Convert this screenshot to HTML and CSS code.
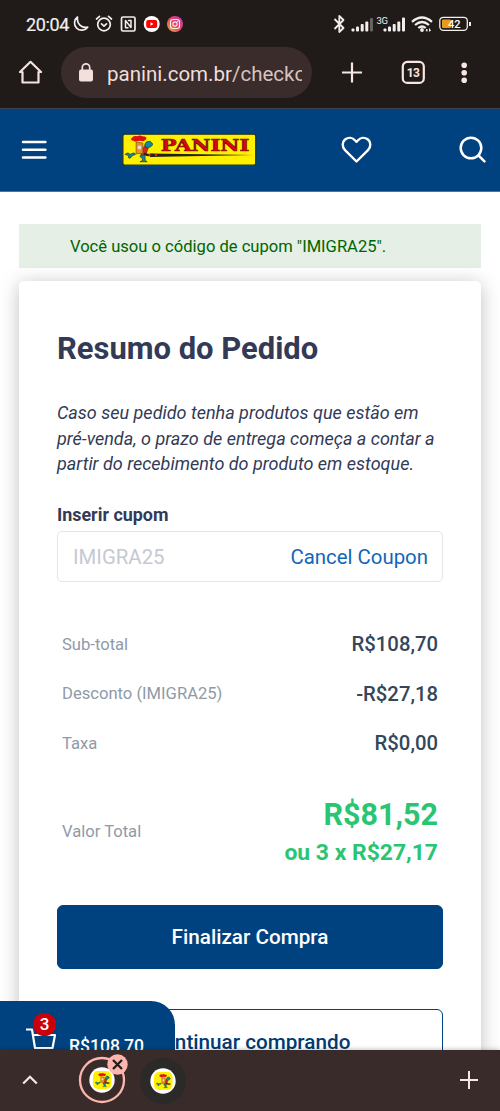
FILE: index.html
```html
<!DOCTYPE html>
<html lang="pt-BR">
<head>
<meta charset="utf-8">
<title>Panini - Checkout</title>
<link rel="stylesheet" href="styles.css">
</head>
<body>
<svg class="defs" width="0" height="0" aria-hidden="true">
  <symbol id="mascot" viewBox="0 0 30 30">
    <path d="M1 20.500l3-1.500 2.500 1.500 4-1.500 1.500 1.500-3.500 1.500-2 2.500-2-.5.500-2z" fill="#138a9c" stroke="#17352e" stroke-width=".7"/>
    <path d="M17 17l5-6 3 3-2 6-5 1.500z" fill="#d9251c" stroke="#222" stroke-width=".6"/>
    <path d="M17.500 21l4 .5.500 5.500 2 1.200h-7.500l3-1.500-1-2.700-2-1zM21.500 10l2-2.500 3.500-.5 3 3-2 2.500-3.500 1.500-2.500-1z" fill="#138a9c" stroke="#17352e" stroke-width=".7"/>
    <path d="M21 18.500q4 2 9 1.500v2q-5 1-9-.5z" fill="#222"/>
    <path d="M25.500 19.800h2v2.400h-2z" fill="#e2231a"/>
    <path d="M9.500 6.500q-4-1.500-1-3.500 2-2 5-1.200 3-1.300 5.500 0 5 .2 4 3.200l-3 2-4-.5-4 1z" fill="#e2100c"/>
    <path d="M12.500 8l7 .8v11h-7z" fill="#e9902a" stroke="#713b15" stroke-width=".6"/>
    <circle cx="16" cy="13.500" r="2" fill="#e8dcc5"/>
  </symbol>
</svg>
<div class="phone">
  <div class="status">
    <span class="clock">20:04</span>
    <svg class="s-left" width="116" height="20" viewBox="0 0 116 20" fill="none" stroke="#f1eeec" stroke-width="1.700" stroke-linecap="round" stroke-linejoin="round">
      <path d="M8.500 3A7.300 7.300 0 1 0 18.700 13.200C12.500 14.500 7.500 9.500 8.500 3z"/>
      <circle cx="35" cy="10.500" r="6.300"/><path d="M32.500 9.800l2.500 2.400 2.500-2.400M27.500 5l3-2.600M42.500 5l-3-2.600"/>
      <rect x="52.500" y="3" width="13.500" height="14" rx="1.500"/><path d="M56.500 13.700V6.500l5.500 7V6.500M59 13.700h-2.500M62 6.500h-2.500" stroke-width="1.500"/>
      <g stroke="none"><circle cx="82.700" cy="10" r="8" fill="#fff"/><rect x="77.200" y="6" width="11" height="8" rx="2" fill="#f00"/><path d="M81.500 8.300v3.400l3-1.700z" fill="#fff"/></g>
      <defs><linearGradient id="ig" x1="0" y1="1" x2="1" y2="0"><stop offset="0" stop-color="#f8b13b"/><stop offset=".5" stop-color="#e74361"/><stop offset="1" stop-color="#b23ac1"/></linearGradient></defs>
      <circle cx="106" cy="10" r="8" fill="url(#ig)" stroke="none"/><g stroke-width="1.100"><rect x="101.500" y="5.500" width="9" height="9" rx="2.500"/><circle cx="106" cy="10" r="2.100"/><path d="M108.600 7.400h.1"/></g>
    </svg>
    <svg class="s-right" width="142" height="22" viewBox="0 0 142 22" fill="none" stroke="#f1eeec" stroke-width="1.600">
      <path d="M3.500 6l9 9-4.200 4V3l4.200 4-9 9" stroke-linejoin="round" stroke-width="1.800"/>
      <g stroke="none" fill="#f1eeec">
        <rect x="20.500" y="15.500" width="3" height="3" rx="1"/><rect x="25" y="13.500" width="3" height="5" rx="1"/><rect x="29.700" y="11" width="3" height="7.500" rx="1"/><rect x="34.300" y="8.500" width="3" height="10" rx="1"/><rect x="39" y="5" width="3" height="13.500" rx="1" fill="#67625f"/>
        <rect x="52.500" y="15.500" width="3" height="3" rx="1"/><rect x="57" y="13.500" width="3" height="5" rx="1"/><rect x="61.700" y="11" width="3" height="7.500" rx="1"/><rect x="66.300" y="8.500" width="3" height="10" rx="1"/><rect x="71" y="4.500" width="3" height="14" rx="1"/>
        <text x="45.500" y="10.500" font-size="9.500" textLength="11.500">3G</text>
        <circle cx="91" cy="17" r="1.900"/><path d="M96 18.500v-2.500l-1.200 1.200M98.500 15.500v2.800l1.200-1.200" stroke="#f1eeec" stroke-width="1"/>
      </g>
      <path d="M81 8.800q10-8.600 20 0M84 12q7-6 14 0M87.300 15q3.700-3 7.400 0" stroke-width="2.200"/>
      <rect x="108.800" y="4.300" width="27.500" height="13" rx="3.500" stroke-width="1.300"/><rect x="111" y="6.500" width="9" height="8.600" rx="1" fill="#e89a1c" stroke="none"/><path d="M139 9v4" stroke-width="2"/>
      <text x="117" y="14.800" font-size="11" font-weight="500" textLength="12.500" fill="#fff" stroke="none">42</text>
    </svg>
  </div>
  <div class="browser">
    <svg class="home" width="24" height="24" viewBox="0 0 24 24" fill="none" stroke="#f6e3df" stroke-width="2.200" stroke-linejoin="round"><path d="M1 12L11.500 1.800 22 12H19.500V22.500H3.500V12z"/></svg>
    <div class="url">
      <svg width="14" height="19" viewBox="0 0 14 19"><rect y="6.500" width="14" height="12" rx="2" fill="#f3dfdc"/><path d="M3.300 7V4.500a3.700 3.700 0 0 1 7.400 0V7" fill="none" stroke="#f3dfdc" stroke-width="1.700"/></svg>
      <span class="address">panini.com.br<span class="path">/checkout</span></span>
    </div>
    <svg class="tools" width="126" height="26" viewBox="0 0 126 26" fill="none" stroke="#f8e6e2" stroke-width="2.200">
      <path d="M2 12.500h20M12 2.500v20"/><rect x="62.800" y="1.900" width="21" height="21" rx="4.500"/><g fill="#f8e6e2" stroke="none"><circle cx="124.200" cy="5.300" r="2.800"/><circle cx="124.200" cy="12.800" r="2.800"/><circle cx="124.200" cy="20.300" r="2.800"/><text x="66.800" y="17" font-size="12" font-weight="700" textLength="13">13</text></g>
    </svg>
  </div>
  <header class="site">
    <svg class="menu" width="26" height="20" viewBox="0 0 26 20" stroke="#fff" stroke-width="2.500" stroke-linecap="round"><path d="M2 2.100h22.400M2 9.700h22.400M2 17.400h22.400"/></svg>
    <svg class="logo" width="135" height="33" viewBox="0 0 135 33">
      <rect x=".9" y="1.200" width="132.800" height="31" rx="2" fill="#fff000" stroke="#29331c" stroke-width="1.200"/>
      <path d="M28 20.500l103.500 1.500-103.500 2z" fill="#24220f"/>
      <path d="M28.500 20.500h2v2.600h-2zM33 20.800h2v2.200h-2z" fill="#e2231a"/>
      <use href="#mascot" x="2" y="1.500" width="29" height="29"/>
      <text x="38.800" y="18.200" font-family="DejaVu Serif" font-size="16.500" font-weight="700" textLength="88.500" lengthAdjust="spacingAndGlyphs" fill="#e3000f" stroke="#6a1510" stroke-width=".7">PANINI</text>
    </svg>
    <svg class="heart" width="32" height="28" viewBox="0 0 32 28" fill="none" stroke="#fff" stroke-width="2.400" stroke-linejoin="round"><path d="M15.500 25.500L4 14.100C.8 10.800 1.100 6.100 4 3.500C7.400.9 11.500 1.500 14.200 4.500L15.500 5.800l1.300-1.300C19.500 1.500 23.600.9 27 3.500c2.900 2.600 3.200 7.300 0 10.600z"/></svg>
    <svg class="search" width="28" height="28" viewBox="0 0 28 28" fill="none" stroke="#fff" stroke-width="2.500" stroke-linecap="round"><circle cx="12" cy="12" r="10.300"/><path d="M19.500 19.500L25.500 25.300"/></svg>
  </header>
  <main>
    <div class="alert">Você usou o código de cupom "IMIGRA25".</div>
    <section class="card">
      <h1>Resumo do Pedido</h1>
      <p class="note">Caso seu pedido tenha produtos que estão em<br>pré-venda, o prazo de entrega começa a contar a<br>partir do recebimento do produto em estoque.</p>
      <div class="label">Inserir cupom</div>
      <div class="coupon"><span class="code">IMIGRA25</span><span class="cancel">Cancel Coupon</span></div>
      <div class="rows">
        <div class="row"><span>Sub-total</span><b>R$108,70</b></div>
        <div class="row"><span>Desconto (IMIGRA25)</span><b>-R$27,18</b></div>
        <div class="row"><span>Taxa</span><b>R$0,00</b></div>
      </div>
      <div class="total"><span>Valor Total</span><div class="amount"><div class="big">R$81,52</div><div class="parts">ou 3 x R$27,17</div></div></div>
      <div class="btn solid">Finalizar Compra</div>
      <div class="btn outline">Continuar comprando</div>
    </section>
    <div class="minicart">
      <svg width="34" height="40" viewBox="0 0 34 40" fill="none" stroke="#fff" stroke-width="2.200" stroke-linejoin="round"><path d="M1 18.500h6l3 18.500h17.500l2.500-13H8"/></svg>
      <span class="badge">3</span>
      <span class="sum">R$108,70</span>
    </div>
  </main>
  <footer class="tabs">
    <svg class="up" width="16" height="10" viewBox="0 0 16 10" fill="none" stroke="#f8e6e2" stroke-width="2.300"><path d="M1.200 8.500L8 1.800l6.800 6.700"/></svg>
    <svg class="tab active" width="52" height="52" viewBox="0 0 52 52"><circle cx="25" cy="28" r="22" fill="none" stroke="#fdb6ad" stroke-width="2.300"/><circle cx="25" cy="28" r="12.700" fill="#fff"/><rect x="16" y="19" width="18.500" height="18" rx="5" fill="#fff000"/><use href="#mascot" x="16.500" y="20.500" width="17" height="15"/><circle cx="40.500" cy="12.500" r="10.200" fill="#fdb6ad"/><path d="M36 8l9 9M45 8l-9 9" stroke="#241d1b" stroke-width="2.300"/></svg>
    <svg class="tab" width="46" height="46" viewBox="0 0 46 46"><circle cx="23" cy="23" r="23" fill="#2b2a29"/><circle cx="23" cy="23" r="12.700" fill="#fff"/><rect x="14" y="14" width="18.500" height="18" rx="5" fill="#fff000"/><use href="#mascot" x="14.500" y="15.500" width="17" height="15"/></svg>
    <svg class="plus" width="18" height="18" viewBox="0 0 18 18" stroke="#f8e6e2" stroke-width="2"><path d="M0 9h18M9 0v18"/></svg>
  </footer>
</div>
</body>
</html>
```

FILE: styles.css
```css
* { box-sizing: border-box; }
body { margin: 0; font-family: Roboto, "Liberation Sans", sans-serif; color: #323a56; background: #fff; }
.defs { position: absolute; }
svg { display: block; flex: none; }
.phone { width: 500px; height: 1111px; display: flex; flex-direction: column; overflow: hidden; }
.status { height: 48px; flex: none; display: flex; align-items: center; padding: 0 27px 0 26px; background: #201b19; }
.clock { color: #f1eeec; font-size: 18px; line-height: 20px; width: 44px; white-space: nowrap; letter-spacing: -.35px; -webkit-text-stroke: .2px #f1eeec; padding-top: 1px; }
.s-left { margin-left: -1px; }
.s-right { margin-left: auto; margin-right: 0; }
.browser { height: 61px; flex: none; display: flex; align-items: flex-start; padding-left: 19px; background: #201b19; border-bottom: 1px solid #3b4353; }
.home { margin-top: 12px; }
.url { width: 251px; height: 51px; margin: -1px 0 0 18px; padding: 0 10px 0 18px; border-radius: 26px; background: #392c2b; display: flex; align-items: center; gap: 14px; }
.address { color: #f0dedb; font-size: 20.500px; line-height: 30px; padding-top: 2px; white-space: nowrap; width: 195px; overflow: hidden; }
.path { color: #d8c2be; }
.tools { margin: 12px 0 0 28px; overflow: visible; }
.site { height: 83px; flex: none; background: #00427f; border-bottom: 1px solid #4676a1; display: flex; align-items: center; padding-left: 21px; }
.logo { margin-left: 75px; margin-top: -1px; }
.heart { margin-left: 84px; }
.search { margin-left: 86px; }
main { flex: 1; min-height: 0; position: relative; overflow: hidden; padding: 32px 19px 0; }
.alert { height: 44px; padding-left: 51px; background: #e5efe5; color: #006400; font-size: 16.570px; line-height: 45px; white-space: nowrap; }
.card { margin-top: 13px; height: 860px; padding: 47px 38px 0; border-radius: 5px; background: #fff; box-shadow: 0 3px 20px rgba(0, 0, 0, .25); }
h1 { margin: 0; font-size: 30.950px; line-height: 42px; font-weight: 700; white-space: nowrap; }
.note { margin: 30px 0 0; font-size: 18px; line-height: 25.500px; font-style: italic; white-space: nowrap; }
.label { margin-top: 25px; font-size: 17.900px; line-height: 26px; font-weight: 700; }
.coupon { margin-top: 3px; height: 51px; padding: 2px 14px 0 15px; border: 1px solid #e4e5e6; border-radius: 5px; display: flex; align-items: center; justify-content: space-between; font-size: 20.400px; }
.code { color: #c5c9d1; }
.cancel { color: #1167b8; }
.rows { padding: 38px 5px 0; }
.row { height: 49.500px; display: flex; align-items: center; justify-content: space-between; }
.row span, .total span { color: #8f9aa8; font-size: 16.600px; }
.row b { color: #34465a; font-size: 20.300px; font-weight: 500; }
.total { margin-top: 27px; height: 76px; padding: 0 5px; display: flex; align-items: center; justify-content: space-between; }
.total span { padding-bottom: 4px; }
.amount { text-align: right; color: #2ac573; font-weight: 700; }
.big { font-size: 30.500px; line-height: 40px; }
.parts { font-size: 22.900px; line-height: 36px; }
.btn { height: 64px; border-radius: 6px; display: flex; align-items: center; justify-content: center; font-size: 20.700px; font-weight: 500; border: 1px solid #00427f; }
.solid { margin-top: 34px; background: #00427f; color: #fff; }
.outline { margin-top: 40px; color: #003b73; padding-top: 1px; }
.minicart { position: absolute; left: 0; bottom: 0; width: 175px; height: 49px; background: #00427f; border-radius: 0 24px 0 0; padding-left: 25px; display: flex; overflow: hidden; }
.minicart svg { margin-top: 10px; }
.badge { position: absolute; left: 33px; top: 12px; width: 23px; height: 23px; border-radius: 50%; background: #cb0008; color: #fff; font-size: 17px; line-height: 23px; font-weight: 500; text-align: center; }
.sum { margin: 32px 0 0 10px; color: #fff; font-size: 17.600px; line-height: 26px; font-weight: 500; }
.tabs { height: 61px; flex: none; background: #382b2a; display: flex; align-items: flex-start; padding-left: 22px; box-shadow: 0 0 5px rgba(0, 0, 0, .3); position: relative; }
.up { margin-top: 25px; }
.active { margin: 2px 0 0 39px; }
.tab + .tab { margin: 8px 0 0 11px; }
.plus { margin: 21px 0 0 274px; }
```
